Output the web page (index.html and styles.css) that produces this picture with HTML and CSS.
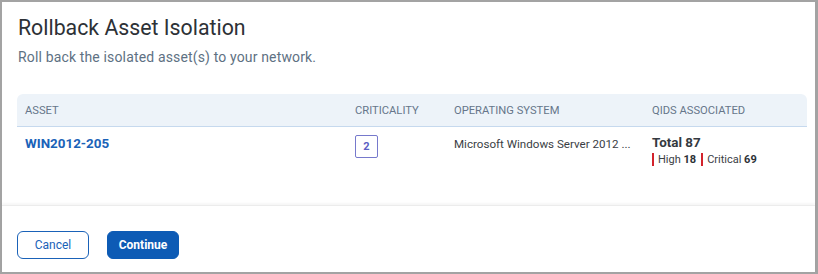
FILE: index.html
```html
<!DOCTYPE html>
<html lang="en">
<head>
  <meta charset="UTF-8">
  <meta name="viewport" content="width=device-width, initial-scale=1.0">
  <title>Rollback Asset Isolation</title>
  <link rel="stylesheet" href="styles.css">
</head>
<body>
  <!-- Dialog -->
  <div class="dialog">
    <div class="dialog-body">
      <h1 class="dialog-title">Rollback Asset Isolation</h1>
      <p class="dialog-subtitle">Roll back the isolated asset(s) to your network.</p>

      <table class="asset-table">
        <thead>
          <tr>
            <th class="col-asset">Asset</th>
            <th class="col-crit">Criticality</th>
            <th class="col-os">Operating System</th>
            <th class="col-qids">QIDs Associated</th>
          </tr>
        </thead>
        <tbody>
          <tr>
            <td><a href="#" class="asset-link">WIN2012-205</a></td>
            <td><span class="crit-badge">2</span></td>
            <td class="os-text">Microsoft Windows Server 2012 ...</td>
            <td>
              <div class="qids-total">Total 87</div>
              <div class="qids-split">
                <span class="sev">High <b>18</b></span>
                <span class="sev">Critical <b>69</b></span>
              </div>
            </td>
          </tr>
        </tbody>
      </table>
    </div>

    <div class="dialog-footer">
      <button class="btn btn-outline">Cancel</button>
      <button class="btn btn-primary">Continue</button>
    </div>
  </div>
</body>
</html>
```

FILE: styles.css
```css
* {
  margin: 0;
  padding: 0;
  box-sizing: border-box;
}

:root {
  --frame: #a3a3a3;
  --text: #2d3136;
  --muted: #5e7183;
  --head-bg: #edf3f9;
  --head-line: #c6d9ee;
  --head-text: #66768a;
  --blue: #1a62b8;
  --blue-dark: #0d5bb5;
  --purple: #5b5fc4;
  --red: #d3232c;
}

body {
  font-family: Roboto, "Liberation Sans", sans-serif;
  background: #fff;
  color: var(--text);
}

/* Dialog */
.dialog {
  height: 274px;
  display: flex;
  flex-direction: column;
  border: 2px solid var(--frame);
  border-right-width: 3px;
  background: #fff;
}

.dialog-body {
  flex: 1;
  padding: 12px 8px 0 15px;
}

.dialog-title {
  font-size: 21.3px;
  line-height: 28px;
  font-weight: 400;
  color: var(--text);
  padding-left: 1px;
}

.dialog-subtitle {
  margin-top: 5px;
  font-size: 14px;
  line-height: 20px;
  letter-spacing: 0.15px;
  color: var(--muted);
  padding-left: 1px;
}

/* Table */
.asset-table {
  margin-top: 27px;
  width: 100%;
  border-collapse: separate;
  border-spacing: 0;
  table-layout: fixed;
}

.asset-table th {
  background: var(--head-bg);
  border-bottom: 1px solid var(--head-line);
  height: 33px;
  padding: 0 8px;
  text-align: left;
  font-size: 11.2px;
  font-weight: 400;
  color: var(--head-text);
  text-transform: uppercase;
}

.asset-table th:first-child {
  border-top-left-radius: 6px;
}

.asset-table th:last-child {
  border-top-right-radius: 6px;
}

.col-asset { width: 330px; }
.col-crit { width: 99px; }
.col-os { width: 198px; }

.asset-table td {
  padding: 7px 8px;
  vertical-align: top;
  font-size: 11.6px;
  line-height: 20px;
}

.asset-link {
  color: var(--blue);
  font-weight: 700;
  font-size: 13.4px;
  text-decoration: none;
}

.crit-badge {
  display: inline-flex;
  align-items: center;
  justify-content: center;
  width: 23px;
  height: 23px;
  margin-top: 1px;
  border: 1px solid #7679cc;
  border-radius: 2px;
  color: var(--purple);
  font-size: 11px;
  font-weight: 700;
}

.os-text {
  color: #3a3e44;
  white-space: nowrap;
}

.qids-total {
  font-size: 13.4px;
  font-weight: 700;
  line-height: 18px;
  color: #343a40;
}

.qids-split {
  display: flex;
  gap: 5px;
  margin-top: 1px;
}

.sev {
  display: inline-block;
  border-left: 2px solid var(--red);
  padding-left: 4px;
  font-size: 11px;
  line-height: 13px;
  color: #3a3e44;
}

.sev b {
  font-weight: 700;
  color: #2d3136;
}

/* Footer */
.dialog-footer {
  border-top: 1px solid #ececec;
  box-shadow: 0 -2px 2px rgba(0, 0, 0, 0.035);
  padding: 25px 15px 13px;
  display: flex;
  gap: 18px;
}

.btn {
  width: 72px;
  height: 28px;
  border-radius: 6px;
  font-family: Roboto, "Liberation Sans", sans-serif;
  font-size: 12px;
  cursor: pointer;
}

.btn-outline {
  background: #fff;
  border: 1px solid var(--blue);
  color: var(--blue);
}

.btn-primary {
  background: var(--blue-dark);
  border: 1px solid var(--blue-dark);
  color: #fff;
  font-weight: 700;
}
```
